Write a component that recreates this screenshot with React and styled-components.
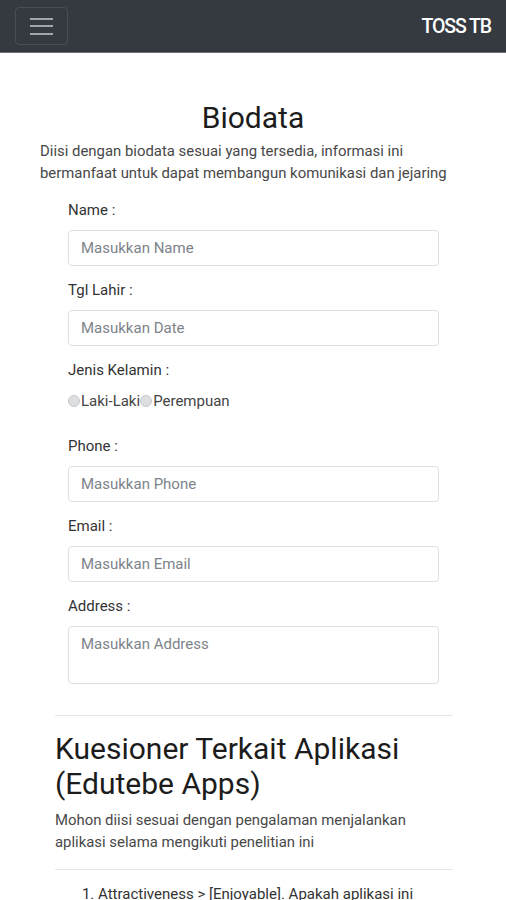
import React from 'react';
import styled, { createGlobalStyle } from 'styled-components';

const Global = createGlobalStyle`
  body {
    margin: 0;
    font-family: Roboto, "Liberation Sans", sans-serif;
    background: #fff;
    color: #212529;
  }
  * { box-sizing: border-box; }
`;

const Navbar = styled.nav`
  height: 53px;
  background: #343a40;
  border-bottom: 1px solid #6c7177;
  display: flex;
  align-items: center;
  justify-content: space-between;
  padding: 0 15px;
`;

const Toggler = styled.button`
  width: 53px;
  height: 38px;
  background: transparent;
  border: 1px solid rgba(255, 255, 255, 0.1);
  border-radius: 4px;
  display: flex;
  flex-direction: column;
  justify-content: center;
  align-items: center;
  gap: 5.5px;
  padding: 0;
`;

const Bar = styled.span`
  display: block;
  width: 23px;
  height: 2px;
  background: rgba(255, 255, 255, 0.55);
`;

const Brand = styled.span`
  color: #fff;
  font-size: 19.5px;
  font-weight: 500;
  letter-spacing: -1.1px;
`;

const Section = styled.section`
  padding: ${p => p.$pad};
`;

const Title = styled.h2`
  margin: ${p => p.$margin};
  font-size: ${p => p.$size || '30px'};
  font-weight: 400;
  line-height: 35px;
  text-align: ${p => (p.$center ? 'center' : 'left')};
  color: #1c1c1c;
`;

const Lead = styled.p`
  margin: 0;
  font-size: 14.9px;
  line-height: 22px;
  color: #484848;
`;

const Form = styled.form`
  margin: 16px 0 0 28px;
  width: 371px;
`;

const Field = styled.div`
  margin-bottom: ${p => p.$mb || '14px'};
`;

const Label = styled.label`
  display: block;
  font-size: 15px;
  line-height: 20px;
  color: #333;
  margin-bottom: 10px;
`;

const Input = styled.input`
  display: block;
  width: 100%;
  height: 36px;
  border: 1px solid #dcdfe3;
  border-radius: 4px;
  padding: 0 12px;
  font-family: inherit;
  font-size: 15px;
  color: #495057;
  &::placeholder { color: #7d838a; }
`;

const TextArea = styled.textarea`
  display: block;
  width: 100%;
  height: 58px;
  border: 1px solid #dcdfe3;
  border-radius: 4px;
  padding: 7px 12px;
  font-family: inherit;
  font-size: 15px;
  line-height: 20px;
  resize: none;
  &::placeholder { color: #7d838a; }
`;

const RadioRow = styled.div`
  display: flex;
  align-items: center;
  font-size: 15px;
  color: #444;
  height: 22px;
`;

const Radio = styled.span`
  width: 12px;
  height: 12px;
  border-radius: 50%;
  border: 1px solid #c4c7cb;
  background: #dedfe1;
  margin-right: 1px;
`;

const Rule = styled.hr`
  border: 0;
  border-top: 1px solid #e6e6e6;
  margin: ${p => p.$margin};
`;

const List = styled.ol`
  margin: 0;
  padding-left: 43px;
  font-size: 15px;
  color: #333;
  li { line-height: 22px; }
`;

const fields = [
  { label: 'Name', ph: 'Masukkan Name' },
  { label: 'Tgl Lahir', ph: 'Masukkan Date' },
];

const fields2 = [
  { label: 'Phone', ph: 'Masukkan Phone' },
  { label: 'Email', ph: 'Masukkan Email' },
];

export default function App() {
  return (
    <>
      <Global />
      <Navbar>
        <Toggler aria-label="menu">
          <Bar /><Bar /><Bar />
        </Toggler>
        <Brand>TOSS TB</Brand>
      </Navbar>

      <Section $pad="0 40px">
        <Title $center $margin="47px 0 5px">Biodata</Title>
        <Lead>
          Diisi dengan biodata sesuai yang tersedia, informasi ini bermanfaat untuk dapat membangun komunikasi dan jejaring
        </Lead>
        <Form>
          {fields.map(f => (
            <Field key={f.label}>
              <Label>{f.label} :</Label>
              <Input placeholder={f.ph} />
            </Field>
          ))}
          <Field $mb="24px">
            <Label>Jenis Kelamin :</Label>
            <RadioRow>
              <Radio />Laki-Laki<Radio />Perempuan
            </RadioRow>
          </Field>
          {fields2.map(f => (
            <Field key={f.label}>
              <Label>{f.label} :</Label>
              <Input placeholder={f.ph} />
            </Field>
          ))}
          <Field $mb="0">
            <Label>Address :</Label>
            <TextArea placeholder="Masukkan Address" />
          </Field>
        </Form>
      </Section>

      <Section $pad="0 53px 0 55px">
        <Rule $margin="31px 0 15px" />
        <Title $margin="0 0 8px">Kuesioner Terkait Aplikasi (Edutebe Apps)</Title>
        <Lead>
          Mohon diisi sesuai dengan pengalaman menjalankan aplikasi selama mengikuti penelitian ini
        </Lead>
        <Rule $margin="16px 0 13px" />
        <List>
          <li>Attractiveness &gt; [Enjoyable]. Apakah aplikasi ini menyenangkan?</li>
        </List>
      </Section>
    </>
  );
}
